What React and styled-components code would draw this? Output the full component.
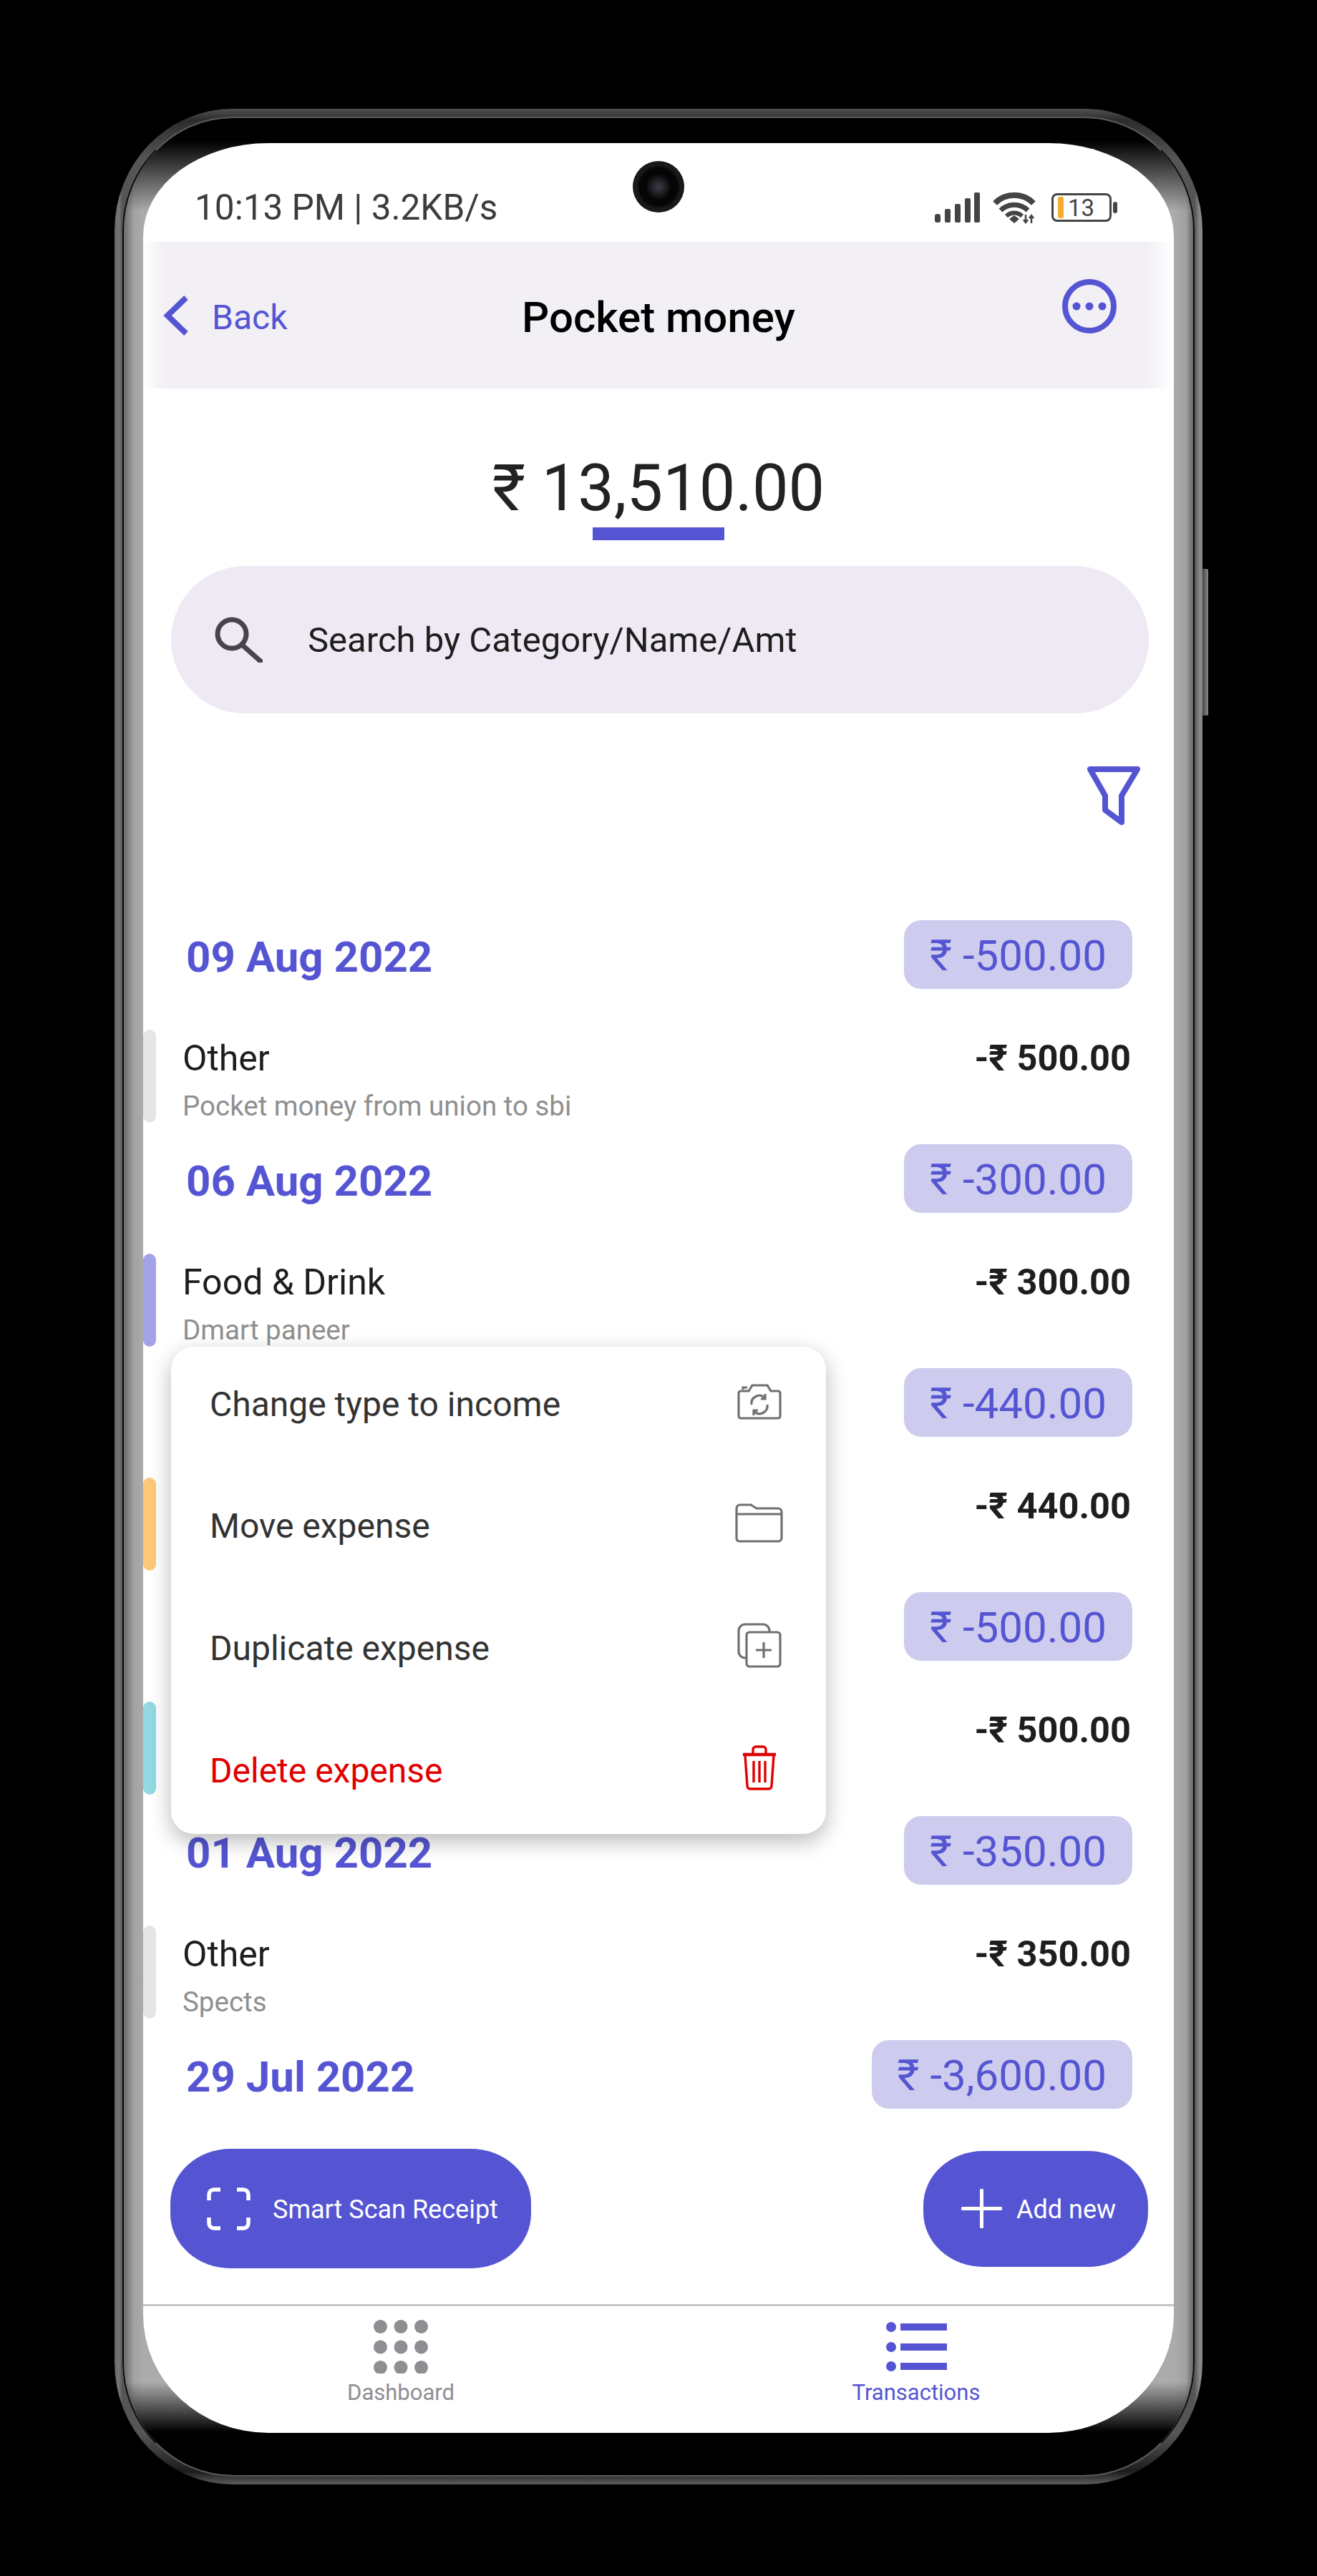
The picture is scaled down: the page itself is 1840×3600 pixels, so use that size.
import React from "react"
import styled, { createGlobalStyle } from "styled-components"

const primary = "#5555d3"

const GlobalStyle = createGlobalStyle`
  html, body {
    margin: 0;
    padding: 0;
    background: #000;
  }
  * {
    box-sizing: border-box;
  }
  body {
    font-family: Roboto, "Noto Sans", sans-serif;
  }
`

const Page = styled.div`
  width: 1840px;
  height: 3600px;
  padding: 152px 0 0 160px;
  background: #000;
  overflow: hidden;
`
const Phone = styled.div`
  position: relative;
  width: 1520px;
  height: 3320px;
  padding: 11px;
  border-radius: 165px / 170px;
  background:
    linear-gradient(180deg, #505050 0, #2c2c2c 16px, transparent 70px, transparent calc(100% - 70px), #1c1c1c calc(100% - 18px), #5c5c5c 100%),
    linear-gradient(90deg, #666 0, #777 6px, #555 11px, #555 calc(100% - 11px), #888 calc(100% - 4px), #888 100%);
`
const SideButton = styled.div`
  position: absolute;
  top: 643px;
  right: -8px;
  width: 8px;
  height: 205px;
  border-radius: 0 2px 2px 0;
  background: linear-gradient(90deg, #444, #8a8a8a);
`
const Ring = styled.div`
  height: 100%;
  border: 2px solid #0a0a0a;
  border-top-color: #5a5a5a;
  border-bottom-color: #5a5a5a;
  border-radius: 155px / 160px;
  overflow: hidden;
`
const Bezel = styled.div`
  height: 100%;
  padding: 35px 27px 59px 27px;
  background:
    linear-gradient(180deg, #000 0, #000 32px, transparent 130px, transparent calc(100% - 130px), #000 calc(100% - 60px), #000 100%),
    linear-gradient(90deg, #6a6a6a 0, #a2a2a2 14px, #ababab 27px, #ababab calc(100% - 27px), #a0a0a0 calc(100% - 10px), #666 100%);
`
const Screen = styled.div`
  position: relative;
  width: 1440px;
  height: 3200px;
  background: #fff;
  border-radius: 175px 175px 175px 175px / 130px 130px 165px 165px;
  overflow: hidden;
`
const CameraHole = styled.div`
  position: absolute;
  top: 25px;
  left: 684px;
  width: 72px;
  height: 72px;
  border-radius: 50%;
  background: radial-gradient(circle at 50% 50%, #3c3e48 0, #1c1c20 22%, #050505 36%, #060606 52%, #1a1a1a 60%, #111 100%);
`

const StatusBar = styled.div`
  display: flex;
  align-items: center;
  justify-content: space-between;
  height: 138px;
  padding: 42px 79px 0 72px;
`
const StatusTime = styled.span`
  font-size: 49.5px;
  color: #3c3c3c;
`
const StatusIcons = styled.div`
  display: flex;
  align-items: center;
`
const Battery = styled.div`
  display: flex;
  align-items: center;
  width: 84px;
  height: 40px;
  margin-left: 21px;
  padding: 0 0 0 6px;
  border: 3px solid #444;
  border-radius: 8px;
  font-size: 33px;
  color: #444;
`
const BatteryLevel = styled.span`
  width: 8px;
  height: 30px;
  margin-right: 6px;
  border-radius: 2px;
  background: #f4ae2f;
`
const BatteryTip = styled.span`
  width: 6px;
  height: 16px;
  margin-left: 2px;
  border-radius: 3px;
  background: #444;
`

const Header = styled.header`
  display: grid;
  grid-template-columns: 1fr auto 1fr;
  align-items: center;
  height: 205px;
  padding: 0 80px 0 28px;
  background: linear-gradient(90deg, #fff 0, #f2eff5 30px, #f2eff5 calc(100% - 40px), #fff 100%);
`
const BackLink = styled.div`
  display: flex;
  align-items: center;
  gap: 32px;
  font-size: 48px;
  color: ${primary};
`
const BackLabel = styled.span`
  margin-top: 5px;
`
const Title = styled.h1`
  margin: 6px 0 0 52px;
  font-size: 60px;
  font-weight: 500;
  color: #000;
`
const MoreButton = styled.div`
  justify-self: end;
  display: flex;
  margin-bottom: 26px;
`

const Balance = styled.div`
  display: flex;
  flex-direction: column;
  align-items: center;
  padding-top: 95px;
`
const BalanceValue = styled.div`
  font-size: 90px;
  line-height: 90px;
  color: #222;
`
const BalanceRule = styled.div`
  width: 184px;
  height: 18px;
  margin-top: 9px;
  background: ${primary};
`
const SearchBox = styled.div`
  display: flex;
  align-items: center;
  gap: 63px;
  width: 1366px;
  height: 206px;
  margin: 36px 0 0 39px;
  padding-left: 61px;
  border-radius: 103px;
  background: #eee9f3;
  font-size: 49px;
  color: #1e1e1e;
`
const FilterRow = styled.div`
  display: flex;
  justify-content: flex-end;
  margin-top: 74px;
  padding-right: 47px;
`

const List = styled.div`
  margin-top: 132px;
`
const Group = styled.section`
  height: 313px;
  &:last-child {
    height: 96px;
  }
`
const DateRow = styled.div`
  display: flex;
  align-items: center;
  justify-content: space-between;
  height: 96px;
  padding: 0 58px 0 60px;
`
const DateLabel = styled.h2`
  margin: 6px 0 0;
  font-size: 60px;
  font-weight: 700;
  color: ${primary};
`
const TotalPill = styled.div`
  padding: 4px 36px 0;
  height: 96px;
  line-height: 92px;
  border-radius: 24px;
  background: #cdccee;
  font-size: 60px;
  color: ${primary};
`
const Row = styled.div`
  display: flex;
  height: 130px;
  margin-top: 57px;
`
const ColorBar = styled.div`
  width: 18px;
  border-radius: 9px;
  background: ${({ $color }) => $color};
`
const RowBody = styled.div`
  flex: 1;
  display: grid;
  grid-template-columns: 1fr auto;
  grid-template-rows: 78px 52px;
  padding: 0 60px 0 37px;
`
const RowName = styled.div`
  font-size: 50px;
  line-height: 80px;
  color: #1e1e1e;
`
const RowAmount = styled.div`
  font-size: 50.5px;
  font-weight: 700;
  line-height: 80px;
  color: #1e1e1e;
`
const RowNote = styled.div`
  grid-column: 1 / 3;
  font-size: 38.5px;
  line-height: 58px;
  color: #8f8f8f;
`

const Menu = styled.div`
  position: absolute;
  top: 1682px;
  left: 39px;
  width: 915px;
  height: 681px;
  border-radius: 32px;
  background: #fff;
  box-shadow: 0 10px 30px rgba(0, 0, 0, 0.28);
`
const MenuList = styled.div`
  margin-top: -5px;
`
const MenuItem = styled.div`
  display: flex;
  align-items: center;
  justify-content: space-between;
  height: 170.67px;
  padding: 0 60px 0 54px;
  font-size: 48px;
  color: ${({ $danger }) => ($danger ? "#e00000" : "#333")};
`
const MenuIcon = styled.div`
  display: flex;
  justify-content: center;
  width: 67px;
  margin-bottom: 8px;
`

const Actions = styled.div`
  display: flex;
  align-items: center;
  justify-content: space-between;
  margin-top: 56px;
  padding: 0 36px 0 38px;
`
const ScanButton = styled.button`
  display: flex;
  align-items: center;
  gap: 31px;
  width: 504px;
  height: 167px;
  padding: 0 0 0 51px;
  border: none;
  border-radius: 84px / 76px;
  background: ${primary};
  font-family: inherit;
  font-size: 36px;
  color: #fff;
`
const AddButton = styled(ScanButton)`
  gap: 20px;
  width: 314px;
  height: 162px;
  padding-left: 53px;
`
const ButtonLabel = styled.span`
  margin-top: 3px;
`
const Divider = styled.div`
  height: 3px;
  margin-top: 50px;
  background: #c6c6c6;
`
const BottomNav = styled.nav`
  display: grid;
  grid-template-columns: 1fr 1fr;
  padding-top: 19px;
`
const NavItem = styled.div`
  display: flex;
  flex-direction: column;
  align-items: center;
  gap: 8px;
  font-size: 31px;
  color: ${({ $active }) => ($active ? primary : "#8e8e93")};
`
const NavIconSlot = styled.div`
  display: flex;
  align-items: center;
  height: 75px;
`

const groups = [
  { date: "09 Aug 2022", total: "₹ -500.00", bar: "#e6e6e6", name: "Other", note: "Pocket money from union to sbi", amount: "-₹ 500.00" },
  { date: "06 Aug 2022", total: "₹ -300.00", bar: "#a3a3ea", name: "Food & Drink", note: "Dmart paneer", amount: "-₹ 300.00" },
  { date: "", total: "₹ -440.00", bar: "#fdc878", name: "", note: "", amount: "-₹ 440.00" },
  { date: "", total: "₹ -500.00", bar: "#92d9e4", name: "", note: "", amount: "-₹ 500.00" },
  { date: "01 Aug 2022", total: "₹ -350.00", bar: "#e6e6e6", name: "Other", note: "Spects", amount: "-₹ 350.00" },
]

const SignalIcon = () => (
  <svg width="63" height="42" viewBox="0 0 63 42" fill="#444">
    <rect x="0" y="30" width="8" height="12" rx="3" />
    <rect x="14" y="23" width="8" height="19" rx="2" />
    <rect x="28" y="16" width="8" height="26" rx="2" />
    <rect x="42" y="8" width="8" height="34" rx="2" />
    <rect x="55" y="0" width="8" height="42" rx="2" />
  </svg>
)

const WifiIcon = () => (
  <svg width="61" height="45" viewBox="0 0 61 45" fill="none" stroke="#444" style={{ marginLeft: 18 }}>
    <path d="M3 16 A38 38 0 0 1 57 16" strokeWidth="8" />
    <path d="M11 26 A27 27 0 0 1 49 26" strokeWidth="7" />
    <path d="M19 34 A16 16 0 0 1 41 34" strokeWidth="6" />
    <path d="M23 38 L30 33 L37 38 L30 44 Z" fill="#444" stroke="none" />
    <path d="M46 32 V43 M43 39 L46 43 L49 39 M54 44 V33 M51 37 L54 33 L57 37" strokeWidth="2.5" />
  </svg>
)

const ChevronIcon = () => (
  <svg width="36" height="56" viewBox="0 0 36 56" fill="none" stroke={primary} strokeWidth="8">
    <polyline points="32,3 6,28 32,53" />
  </svg>
)

const MoreIcon = () => (
  <svg width="76" height="76" viewBox="0 0 76 76" fill={primary}>
    <circle cx="38" cy="38" r="34" fill="none" stroke={primary} strokeWidth="8" />
    <circle cx="20" cy="38" r="5.5" />
    <circle cx="38" cy="38" r="5.5" />
    <circle cx="56" cy="38" r="5.5" />
  </svg>
)

const SearchIcon = () => (
  <svg width="67" height="64" viewBox="0 0 67 64" fill="none" stroke="#48444f" strokeWidth="7">
    <circle cx="24" cy="24" r="20" />
    <line x1="38" y1="39" x2="64" y2="62" strokeLinecap="round" />
  </svg>
)

const FilterIcon = () => (
  <svg width="74" height="83" viewBox="0 0 74 83" fill="none" stroke={primary} strokeWidth="8" strokeLinejoin="round">
    <path d="M4 4 H70 L48 41 V78 L25 61 V41 Z" />
  </svg>
)

const CameraSwitchIcon = () => (
  <svg width="62" height="51" viewBox="0 0 62 51" fill="none" stroke="#707070" strokeWidth="3.2">
    <path d="M5 11 H16 L21 3 H42 L47 11 H57 A3 3 0 0 1 60 14 V46 A3 3 0 0 1 57 49 H5 A3 3 0 0 1 2 46 V14 A3 3 0 0 1 5 11 Z" />
    <path d="M8 9 V6 H14" />
    <path d="M20 30 A11 11 0 0 1 38 20" />
    <path d="M42 30 A11 11 0 0 1 24 40" />
    <path d="M39 15 V22 H33" />
    <path d="M23 45 V38 H29" />
  </svg>
)

const FolderIcon = () => (
  <svg width="67" height="55" viewBox="0 0 67 55" fill="none" stroke="#707070" strokeWidth="3.2">
    <path d="M2 49 V7 A5 5 0 0 1 7 2 H22 L30 7 H60 A5 5 0 0 1 65 12 V48 A5 5 0 0 1 60 53 H6 A4 4 0 0 1 2 49 Z" />
    <path d="M2 15 H65" />
  </svg>
)

const CopyPlusIcon = () => (
  <svg width="62" height="63" viewBox="0 0 62 63" fill="none" stroke="#707070" strokeWidth="3.2">
    <path d="M13 49 H11 A9 9 0 0 1 2 40 V11 A9 9 0 0 1 11 2 H36 A9 9 0 0 1 45 11 V13" />
    <rect x="13" y="13" width="47" height="48" rx="4" />
    <path d="M37 27 V49 M26 38 H48" />
  </svg>
)

const TrashIcon = () => (
  <svg width="50" height="63" viewBox="0 0 50 63" fill="none" stroke="#e00000" strokeWidth="3.4">
    <path d="M2 13 H48" strokeWidth="4.5" />
    <path d="M16 12 V6 A4 4 0 0 1 20 2 H30 A4 4 0 0 1 34 6 V12" />
    <path d="M5 14 L8 57 A4 4 0 0 0 12 61 H38 A4 4 0 0 0 42 57 L45 14" />
    <path d="M17 22 V52 M25 22 V52 M33 22 V52" />
  </svg>
)

const ScanIcon = () => (
  <svg width="61" height="60" viewBox="0 0 61 60" fill="none" stroke="#fff" strokeWidth="5.5">
    <path d="M3 18 V10 A7 7 0 0 1 10 3 H19" />
    <path d="M42 3 H51 A7 7 0 0 1 58 10 V18" />
    <path d="M3 42 V50 A7 7 0 0 0 10 57 H19" />
    <path d="M42 57 H51 A7 7 0 0 0 58 50 V42" />
  </svg>
)

const PlusIcon = () => (
  <svg width="57" height="55" viewBox="0 0 57 55" fill="none" stroke="#fff" strokeWidth="5" strokeLinecap="round">
    <path d="M28.5 2 V53 M2 27.5 H55" />
  </svg>
)

const GridIcon = () => (
  <svg width="76" height="75" viewBox="0 0 76 75" fill="#8e8e93">
    {[9.5, 38, 66.5].map((cy) =>
      [9.5, 38, 66.5].map((cx) => <circle key={`${cx}-${cy}`} cx={cx} cy={cy} r="9.5" />)
    )}
  </svg>
)

const ListIcon = () => (
  <svg width="85" height="70" viewBox="0 0 85 70" fill={primary}>
    {[7, 35, 62].map((cy) => (
      <g key={cy}>
        <circle cx="7" cy={cy} r="7" />
        <rect x="20" y={cy - 5} width="65" height="10" />
      </g>
    ))}
  </svg>
)

const menuItems = [
  { label: "Change type to income", icon: <CameraSwitchIcon /> },
  { label: "Move expense", icon: <FolderIcon /> },
  { label: "Duplicate expense", icon: <CopyPlusIcon /> },
  { label: "Delete expense", icon: <TrashIcon />, danger: true },
]

export default function App() {
  return (
    <Page>
      <GlobalStyle />
      <Phone>
        <SideButton />
        <Ring>
          <Bezel>
            <Screen>
              <CameraHole />
              <StatusBar>
                <StatusTime>10:13 PM | 3.2KB/s</StatusTime>
                <StatusIcons>
                  <SignalIcon />
                  <WifiIcon />
                  <Battery>
                    <BatteryLevel />
                    13
                  </Battery>
                  <BatteryTip />
                </StatusIcons>
              </StatusBar>

              <Header>
                <BackLink>
                  <ChevronIcon />
                  <BackLabel>Back</BackLabel>
                </BackLink>
                <Title>Pocket money</Title>
                <MoreButton>
                  <MoreIcon />
                </MoreButton>
              </Header>

              <Balance>
                <BalanceValue>₹ 13,510.00</BalanceValue>
                <BalanceRule />
              </Balance>

              <SearchBox>
                <SearchIcon />
                Search by Category/Name/Amt
              </SearchBox>

              <FilterRow>
                <FilterIcon />
              </FilterRow>

              <List>
                {groups.map((g, i) => (
                  <Group key={i}>
                    <DateRow>
                      <DateLabel>{g.date}</DateLabel>
                      <TotalPill>{g.total}</TotalPill>
                    </DateRow>
                    <Row>
                      <ColorBar $color={g.bar} />
                      <RowBody>
                        <RowName>{g.name}</RowName>
                        <RowAmount>{g.amount}</RowAmount>
                        <RowNote>{g.note}</RowNote>
                      </RowBody>
                    </Row>
                  </Group>
                ))}
                <Group>
                  <DateRow>
                    <DateLabel>29 Jul 2022</DateLabel>
                    <TotalPill>₹ -3,600.00</TotalPill>
                  </DateRow>
                </Group>
              </List>

              <Actions>
                <ScanButton>
                  <ScanIcon />
                  <ButtonLabel>Smart Scan Receipt</ButtonLabel>
                </ScanButton>
                <AddButton>
                  <PlusIcon />
                  <ButtonLabel>Add new</ButtonLabel>
                </AddButton>
              </Actions>

              <Divider />
              <BottomNav>
                <NavItem>
                  <NavIconSlot>
                    <GridIcon />
                  </NavIconSlot>
                  Dashboard
                </NavItem>
                <NavItem $active>
                  <NavIconSlot>
                    <ListIcon />
                  </NavIconSlot>
                  Transactions
                </NavItem>
              </BottomNav>

              <Menu>
                <MenuList>
                  {menuItems.map((item) => (
                    <MenuItem key={item.label} $danger={item.danger}>
                      {item.label}
                      <MenuIcon>{item.icon}</MenuIcon>
                    </MenuItem>
                  ))}
                </MenuList>
              </Menu>
            </Screen>
          </Bezel>
        </Ring>
      </Phone>
    </Page>
  )
}
